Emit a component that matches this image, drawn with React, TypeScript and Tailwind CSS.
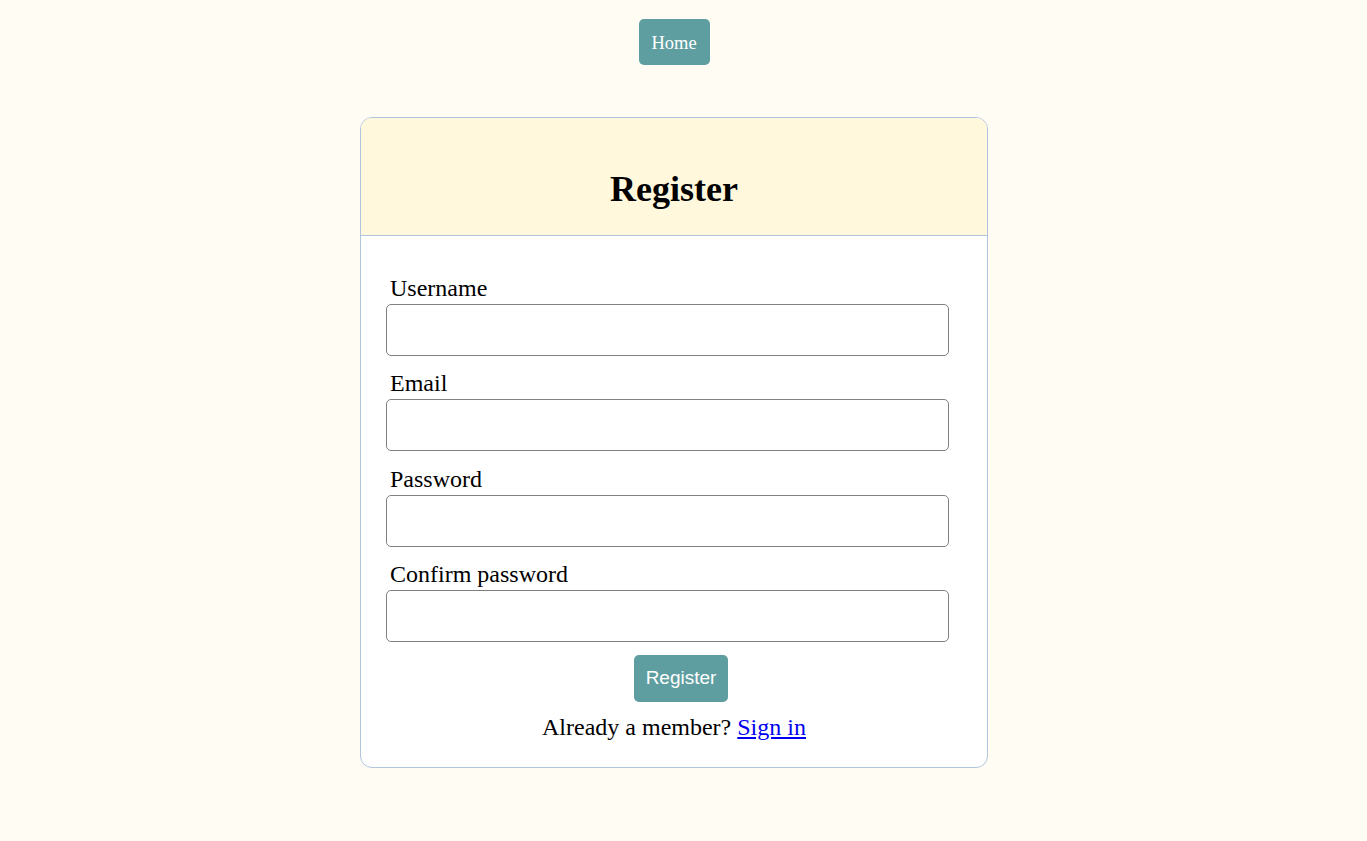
const fields = ['Username', 'Email', 'Password', 'Confirm password'];

export default function App() {
  return (
    <div className="min-h-[841px] bg-[#fffcf4] font-['Liberation_Serif',serif] text-black">
      <div className="w-[1348px]">
        <nav className="flex justify-center pt-[19px]">
          <a className="flex h-[46px] w-[71px] items-center justify-center rounded-[5px] bg-[#5f9ea0] pt-[4px] text-[18.5px] text-white">
            Home
          </a>
        </nav>

        <div className="mx-auto mt-[52px] w-[628px] overflow-hidden rounded-[12px] border border-[#b0c4de] bg-white">
          <div className="flex h-[118px] items-start justify-center border-b border-[#b0c4de] bg-[#fff8dc] pt-[51px]">
            <h1 className="text-[36px] leading-[40px] font-bold">Register</h1>
          </div>

          <form className="flex flex-col px-[25px] pt-[36px] pb-[27px]">
            {fields.map((f) => (
              <div key={f} className="mb-[11.4px] flex flex-col">
                <label className="pl-[4px] text-[24px] leading-[32px]">{f}</label>
                <input
                  type={f.toLowerCase().includes('password') ? 'password' : 'text'}
                  className="h-[52px] w-[563px] rounded-[5px] border border-[#808080] bg-white"
                />
              </div>
            ))}
            <div className="mt-[1.5px] flex justify-center pl-[14px]">
              <button
                type="button"
                className="h-[47px] w-[94px] rounded-[5px] bg-[#5f9ea0] font-['Liberation_Sans',sans-serif] text-[19px] text-white"
              >
                Register
              </button>
            </div>
            <p className="mt-[12px] text-center text-[24px] leading-[26px]">
              Already a member?{' '}
              <a href="#" className="text-[#0000ee] underline">
                Sign in
              </a>
            </p>
          </form>
        </div>
      </div>
    </div>
  );
}
